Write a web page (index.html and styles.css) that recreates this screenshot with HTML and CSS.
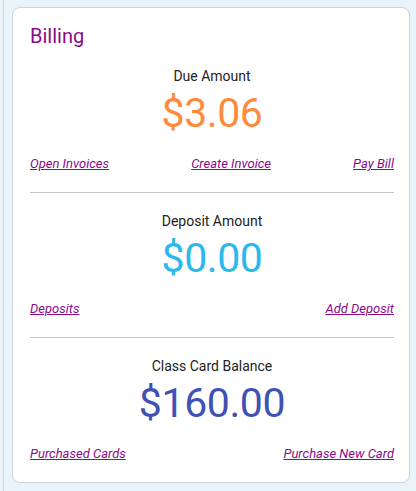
FILE: index.html
```html
<!DOCTYPE html>
<html>
<head>
<meta charset="utf-8">
<link rel="stylesheet" href="styles.css">
</head>
<body>
<div class="frame">
  <div class="card">
    <h2 class="title">Billing</h2>
    <section class="sec first">
      <div class="label">Due Amount</div>
      <div class="amount due">$3.06</div>
      <div class="links">
        <a href="#">Open Invoices</a>
        <a href="#">Create Invoice</a>
        <a href="#">Pay Bill</a>
      </div>
    </section>
    <hr class="div">
    <section class="sec">
      <div class="label">Deposit Amount</div>
      <div class="amount deposit">$0.00</div>
      <div class="links">
        <a href="#">Deposits</a>
        <a href="#">Add Deposit</a>
      </div>
    </section>
    <hr class="div">
    <section class="sec">
      <div class="label">Class Card Balance</div>
      <div class="amount card-bal">$160.00</div>
      <div class="links">
        <a href="#">Purchased Cards</a>
        <a href="#">Purchase New Card</a>
      </div>
    </section>
  </div>
</div>
</body>
</html>
```
FILE: styles.css
```css
html, body {
  margin: 0;
  padding: 0;
  background: #e9f4fa;
  font-family: Roboto, "Noto Sans", sans-serif;
}
.frame {
  margin-left: 3px;
  border-left: 1px solid #cfd6dc;
  padding: 7px 6px 8px 8px;
  min-height: 476px;
}
.card {
  background: #fff;
  border: 1px solid #d2d2d2;
  border-radius: 8px;
  padding: 14px 15px 20px 17px;
  width: 364px;
}
.title {
  margin: 0;
  font-weight: 400;
  font-size: 20px;
  line-height: 28px;
  color: #8b0a8b;
}
.sec {
  display: flex;
  flex-direction: column;
  align-items: center;
  padding-top: 18px;
}
.sec.first {
  padding-top: 16px;
}
.label {
  font-size: 14px;
  line-height: 20px;
  color: #222;
}
.amount {
  font-size: 41px;
  line-height: 48px;
  letter-spacing: -0.4px;
  margin-top: 3px;
}
.due { color: #ff8a3d; }
.deposit { color: #2bb8ec; }
.card-bal { color: #3f51b5; }
.links {
  align-self: stretch;
  display: flex;
  justify-content: space-between;
  margin-top: 19px;
  font-size: 13px;
  line-height: 16px;
}
.links a {
  color: #8b0a8b;
  font-style: italic;
  text-decoration: underline;
}
.div {
  margin: 20px 0 0;
  border: 0;
  border-top: 1px solid #c8c8c8;
  height: 0;
}
```
